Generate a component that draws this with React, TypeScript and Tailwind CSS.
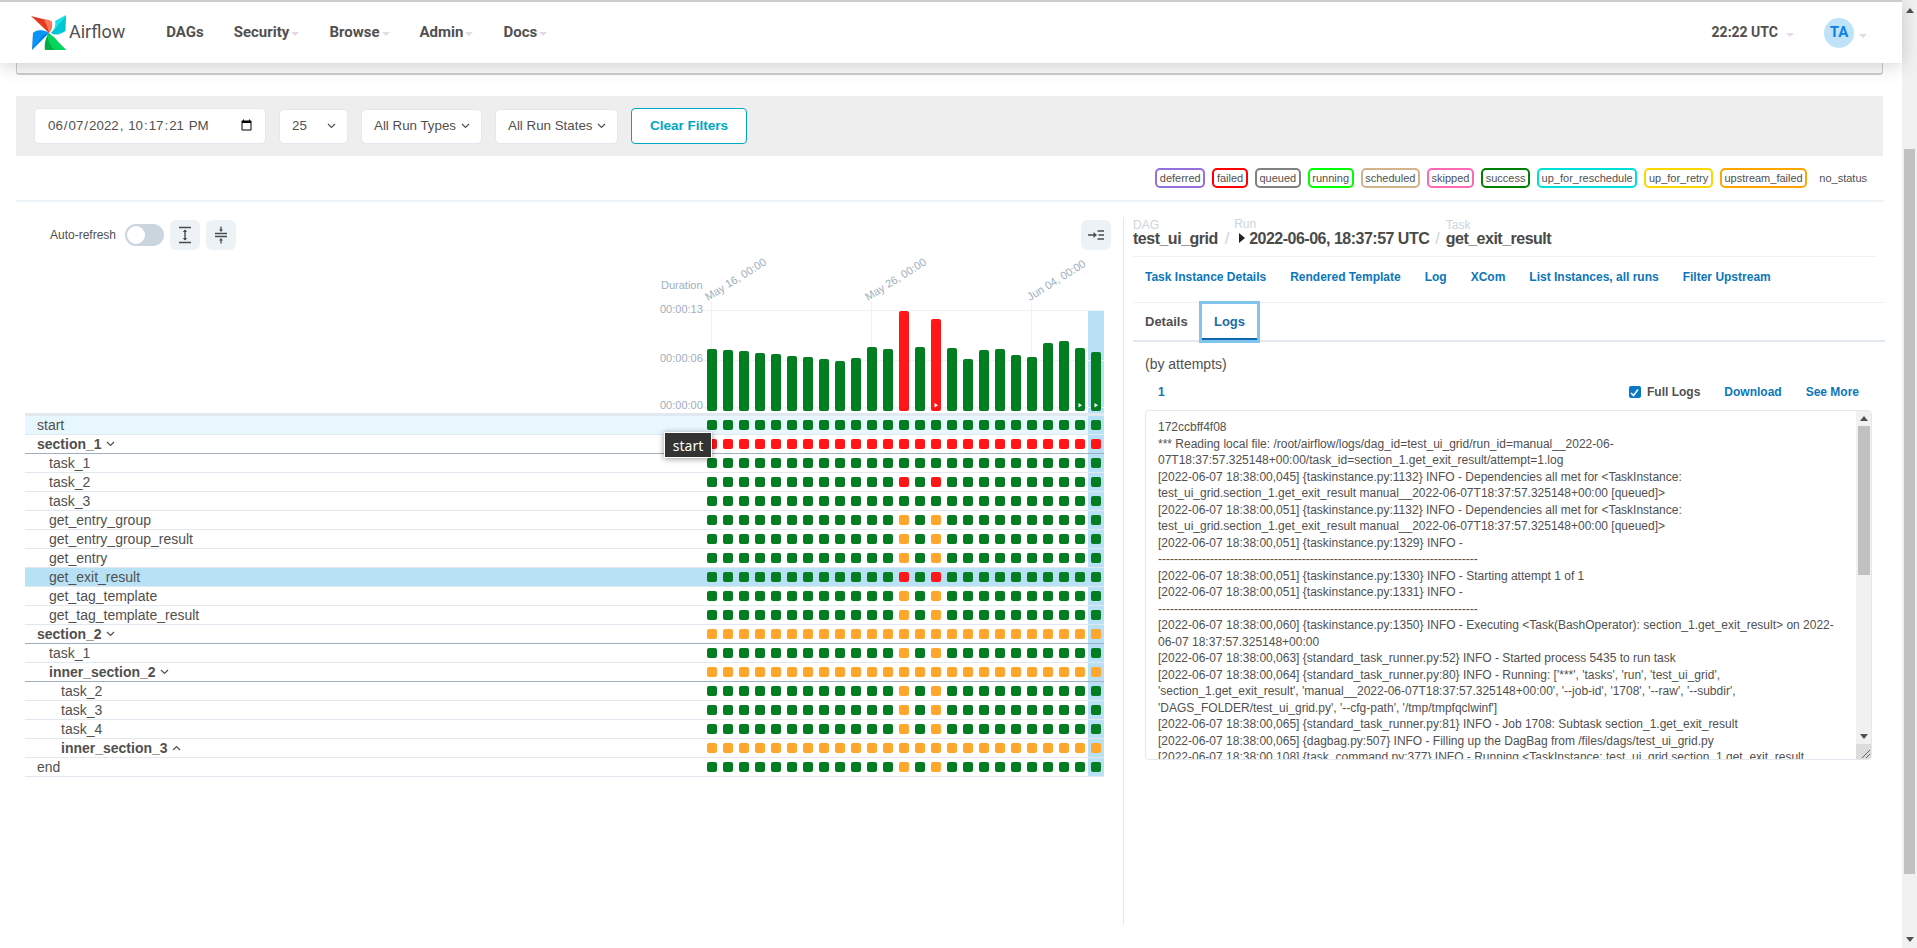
import React from "react";

const GREEN = "bg-[#027d22]";
const RED = "bg-[#ff1616]";
const ORANGE = "bg-[#ffa62d]";

type Row = { name: string; level: number; group?: "down" | "up"; pat: "g" | "r" | "o" | "gr" | "go"; selected?: boolean; hover?: boolean };

const rows: Row[] = [
  { name: "start", level: 0, pat: "g", hover: true },
  { name: "section_1", level: 0, group: "down", pat: "r" },
  { name: "task_1", level: 1, pat: "g" },
  { name: "task_2", level: 1, pat: "gr" },
  { name: "task_3", level: 1, pat: "g" },
  { name: "get_entry_group", level: 1, pat: "go" },
  { name: "get_entry_group_result", level: 1, pat: "go" },
  { name: "get_entry", level: 1, pat: "go" },
  { name: "get_exit_result", level: 1, pat: "gr", selected: true },
  { name: "get_tag_template", level: 1, pat: "go" },
  { name: "get_tag_template_result", level: 1, pat: "go" },
  { name: "section_2", level: 0, group: "down", pat: "o" },
  { name: "task_1", level: 1, pat: "go" },
  { name: "inner_section_2", level: 1, group: "down", pat: "o" },
  { name: "task_2", level: 2, pat: "go" },
  { name: "task_3", level: 2, pat: "go" },
  { name: "task_4", level: 2, pat: "go" },
  { name: "inner_section_3", level: 2, group: "up", pat: "o" },
  { name: "end", level: 0, pat: "go" },
];

const barTops = [327, 330, 333, 339, 342, 348, 351, 357, 363, 354, 321, 327, 213, 321, 237, 324, 357, 330, 327, 345, 351, 309, 303, 324, 336];
const cols = Array.from({ length: 25 }, (_, i) => i);

function cellColor(p: Row["pat"], i: number) {
  if (p === "g") return GREEN;
  if (p === "r") return RED;
  if (p === "o") return ORANGE;
  const special = i === 12 || i === 14;
  if (p === "gr") return special ? RED : GREEN;
  return special ? ORANGE : GREEN;
}

const legend: [string, string][] = [
  ["deferred", "border-[#9370db]"],
  ["failed", "border-[#ff0000]"],
  ["queued", "border-[#808080]"],
  ["running", "border-[#00ff00]"],
  ["scheduled", "border-[#d2b48c]"],
  ["skipped", "border-[#ff69b4]"],
  ["success", "border-[#008000]"],
  ["up_for_reschedule", "border-[#00e0d8]"],
  ["up_for_retry", "border-[#ffd700]"],
  ["upstream_failed", "border-[#ffa500]"],
];

const DASH = "-".repeat(80);
const logLines = [
  "172ccbff4f08",
  "*** Reading local file: /root/airflow/logs/dag_id=test_ui_grid/run_id=manual__2022-06-",
  "07T18:37:57.325148+00:00/task_id=section_1.get_exit_result/attempt=1.log",
  "[2022-06-07 18:38:00,045] {taskinstance.py:1132} INFO - Dependencies all met for <TaskInstance:",
  "test_ui_grid.section_1.get_exit_result manual__2022-06-07T18:37:57.325148+00:00 [queued]>",
  "[2022-06-07 18:38:00,051] {taskinstance.py:1132} INFO - Dependencies all met for <TaskInstance:",
  "test_ui_grid.section_1.get_exit_result manual__2022-06-07T18:37:57.325148+00:00 [queued]>",
  "[2022-06-07 18:38:00,051] {taskinstance.py:1329} INFO -",
  DASH,
  "[2022-06-07 18:38:00,051] {taskinstance.py:1330} INFO - Starting attempt 1 of 1",
  "[2022-06-07 18:38:00,051] {taskinstance.py:1331} INFO -",
  DASH,
  "[2022-06-07 18:38:00,060] {taskinstance.py:1350} INFO - Executing <Task(BashOperator): section_1.get_exit_result> on 2022-",
  "06-07 18:37:57.325148+00:00",
  "[2022-06-07 18:38:00,063] {standard_task_runner.py:52} INFO - Started process 5435 to run task",
  "[2022-06-07 18:38:00,064] {standard_task_runner.py:80} INFO - Running: ['***', 'tasks', 'run', 'test_ui_grid',",
  "'section_1.get_exit_result', 'manual__2022-06-07T18:37:57.325148+00:00', '--job-id', '1708', '--raw', '--subdir',",
  "'DAGS_FOLDER/test_ui_grid.py', '--cfg-path', '/tmp/tmpfqclwinf']",
  "[2022-06-07 18:38:00,065] {standard_task_runner.py:81} INFO - Job 1708: Subtask section_1.get_exit_result",
  "[2022-06-07 18:38:00,065] {dagbag.py:507} INFO - Filling up the DagBag from /files/dags/test_ui_grid.py",
  "[2022-06-07 18:38:00,108] {task_command.py:377} INFO - Running <TaskInstance: test_ui_grid.section_1.get_exit_result",
];

function Caret() {
  return <span className="ml-[2px] inline-block w-0 h-0 border-x-[4px] border-x-transparent border-t-[4px] border-t-[#e6d8e6] mt-[3px]" />;
}

function Logo() {
  return (
    <svg width="36" height="36" viewBox="0 0 36 36">
      <path d="M0 1 L20 6 C22 10 21 14 18 18 Z" fill="#e43921" />
      <path d="M12 3.5 L20 6 C22 10 21 14 18 18 C17 13 15 8 12 3.5Z" fill="#ff7557" />
      <path d="M35 0 L20 18 C25 21 30 19 34.5 16 Z" fill="#00c7d4" />
      <path d="M35 0 L20 18 C24 15 25 9 24 6 Z" fill="#11e1ee" />
      <path d="M1 35 L2 18 C7 14 13 15 18 18 Z" fill="#017cee" />
      <path d="M2 18 C7 14 13 15 18 18 C13 19 9 23 6.5 28 L2 33 Z" fill="#0cb6ff" opacity="0.45" />
      <path d="M35 35 L14 35 C13 28 15 22 18 18 Z" fill="#00ad46" />
      <path d="M16 20 C20 19 24 22 27 27 L35 35 L24 35 C19 31 17 25 16 20Z" fill="#04d659" />
    </svg>
  );
}

function Chevron({ className = "" }: { className?: string }) {
  return (
    <svg width="9" height="6" viewBox="0 0 9 6" className={className} fill="none" stroke="#51504f" strokeWidth="1.2">
      <path d="M1 1 L4.5 4.5 L8 1" />
    </svg>
  );
}

function NavItem({ label, caret = true }: { label: string; caret?: boolean }) {
  return (
    <div className="flex items-center text-[15px] font-bold text-[#51504f]">
      {label}
      {caret && <Caret />}
    </div>
  );
}

function Chart() {
  const W = 1079;
  const lx = (x: number) => x - 25;
  const ly = (y: number) => y - 255;
  return (
    <svg width={W} height={158} className="block" style={{ fontFamily: "'Liberation Sans', sans-serif" }}>
      <rect x={lx(1088)} y={ly(311)} width={16} height={102} fill="#b9e1f6" />
      {[310, 360, 407].map((y) => (
        <line key={y} x1={lx(702)} x2={W} y1={ly(y) + 0.5} y2={ly(y) + 0.5} stroke="#edf2f7" />
      ))}
      {[711, 871, 1031].map((x) => (
        <line key={x} x1={lx(x) + 0.5} x2={lx(x) + 0.5} y1={ly(302)} y2={ly(412)} stroke="#edf2f7" />
      ))}
      <text x={lx(661)} y={ly(289)} fontSize="11" fill="#a0aec0">Duration</text>
      <text x={lx(660)} y={ly(313)} fontSize="11" fill="#a0aec0">00:00:13</text>
      <text x={lx(660)} y={ly(362)} fontSize="11" fill="#a0aec0">00:00:06</text>
      <text x={lx(660)} y={ly(409)} fontSize="11" fill="#a0aec0">00:00:00</text>
      {[
        ["May 16, 00:00", 708],
        ["May 26, 00:00", 868],
        ["Jun 04, 00:00", 1030],
      ].map(([t, x]) => (
        <text key={t as string} x={0} y={0} fontSize="11" fill="#a0aec0" transform={`translate(${lx(x as number)} ${ly(301)}) rotate(-32)`}>
          {t}
        </text>
      ))}
      {barTops.map((t, i) => {
        const top = 240 + t / 3;
        const x = lx(707 + i * 16);
        const red = i === 12 || i === 14;
        return <rect key={i} x={x} y={ly(top)} width={10} height={411 - top} rx={2} fill={red ? "#ff1616" : "#027d22"} />;
      })}
      {[14, 23, 24].map((i) => (
        <path key={i} d={`M${lx(707 + i * 16) + 3.5} ${ly(403)} l3.5 2.2 l-3.5 2.2 z`} fill="#ffffff" />
      ))}
    </svg>
  );
}

function GridRow({ r }: { r: Row }) {
  const bg = r.selected ? "bg-[#b9e1f6]" : r.hover ? "bg-[#e8f6fd]" : "bg-white";
  const border = r.group === "down" ? "border-[#a0aec0]" : "border-[#e2e8f0]";
  const pad = r.level === 0 ? "pl-[12px]" : r.level === 1 ? "pl-[24px]" : "pl-[36px]";
  return (
    <div className={`flex h-[19px] border-b ${border} ${bg}`}>
      <div className={`flex-1 flex items-center text-[14px] leading-[18px] text-[#51504f] ${pad} ${r.group ? "font-bold" : ""}`}>
        {r.name}
        {r.group && <Chevron className={`ml-[4px] ${r.group === "up" ? "rotate-180" : ""}`} />}
      </div>
      <div className="flex">
        {cols.map((i) => (
          <div key={i} className={`w-4 pt-[4px] pl-[3px] ${i === 24 ? "bg-[#b9e1f6]" : ""}`}>
            <div className={`w-[10px] h-[10px] rounded-[2px] ${cellColor(r.pat, i)}`} />
          </div>
        ))}
      </div>
    </div>
  );
}

function Crumb({ label, value, arrow, lift }: { label: string; value: string; arrow?: boolean; lift?: boolean }) {
  return (
    <div className="flex flex-col">
      <div className={`text-[12px] leading-[12px] text-[#cbd5e0] font-normal ${lift ? "mt-[-1px] mb-[1px]" : ""}`}>{label}</div>
      <div className="flex items-center text-[16px] leading-[16px] text-[#4a4a49] font-bold tracking-[-0.5px] whitespace-nowrap">
        {arrow && <span className="w-0 h-0 ml-[5px] mr-[4px] mb-[3px] border-y-[5px] border-y-transparent border-l-[6px] border-l-[#222]" />}
        {value}
      </div>
    </div>
  );
}

function ScrollArrow({ up }: { up?: boolean }) {
  return (
    <div className={`w-0 h-0 border-x-[4px] border-x-transparent ${up ? "border-b-[5px] border-b-[#505050]" : "border-t-[5px] border-t-[#505050]"}`} />
  );
}

function Select({ label, w }: { label: string; w: string }) {
  return (
    <div className={`${w} h-[35px] bg-white rounded-[5px] border border-[#e2e8f0] flex items-center justify-between pl-[12px] pr-[11px] text-[13.33px] text-[#51504f]`}>
      {label}
      <Chevron />
    </div>
  );
}

export default function App() {
  return (
    <div className="flex h-[948px] w-full overflow-hidden bg-white text-[#51504f]" style={{ fontFamily: "'Liberation Sans', Arial, sans-serif" }}>
      <div className="flex-1 min-w-0 flex flex-col">
        <nav className="relative z-10 h-[63px] shrink-0 bg-white border-t-2 border-[#cccccc] shadow-[0_2px_18px_rgba(0,0,0,0.18)] flex items-center pl-[31px] pr-[35px]" style={{ fontFamily: "Roboto, sans-serif" }}>
          <div className="flex items-center">
            <Logo />
            <span className="ml-[2px] text-[18px] leading-none text-[#51504f] mb-[1px]">Airflow</span>
          </div>
          <div className="flex items-center gap-[30px] ml-[41px]">
            <NavItem label="DAGs" caret={false} />
            <NavItem label="Security" />
            <NavItem label="Browse" />
            <NavItem label="Admin" />
            <NavItem label="Docs" />
          </div>
          <div className="ml-auto flex items-center">
            <div className="flex items-center text-[14px] font-bold text-[#51504f]">
              22:22 UTC
              <span className="ml-[6px]"><Caret /></span>
            </div>
            <div className="ml-[30px] w-[30px] h-[30px] rounded-full bg-[#bee3f8] flex items-center justify-center text-[15px] font-bold text-[#0d80e4]">TA</div>
            <span className="ml-[3px]"><Caret /></span>
          </div>
        </nav>

        <div className="h-[12px] ml-[16px] mr-[19px] shrink-0 border-x border-b-2 border-[#cccccc] rounded-b-[3px] bg-[#fafafa]" />

        <div className="mt-[21px] ml-[16px] mr-[19px] h-[60px] shrink-0 bg-[#eeeeee] flex items-center pl-[18px]">
          <input
            type="datetime-local"
            step="1"
            defaultValue="2022-06-07T22:17:21"
            className="w-[232px] h-[36px] bg-white rounded-[5px] border border-[#e2e8f0] pl-[12px] pr-[10px] text-[13.33px] text-[#51504f]"
          />
          <div className="ml-[13px]"><Select label="25" w="w-[69px]" /></div>
          <div className="ml-[13px]"><Select label="All Run Types" w="w-[121px]" /></div>
          <div className="ml-[13px]"><Select label="All Run States" w="w-[123px]" /></div>
          <div className="ml-[13px] w-[116px] h-[36px] bg-white rounded-[4px] border border-[#00a7c4] flex items-center justify-center text-[13.5px] font-bold text-[#00a7c4]">Clear Filters</div>
        </div>

        <div className="mt-[12px] pr-[35px] flex justify-end items-center gap-[7px] h-[20px] shrink-0">
          {legend.map(([t, c]) => (
            <div key={t} className={`h-[20px] px-[2.6px] border-2 rounded-[5px] ${c} flex items-center text-[11px] text-[#51504f]`}>{t}</div>
          ))}
          <div className="ml-[5px] text-[11px] text-[#51504f]">no_status</div>
        </div>

        <div className="mt-[12px] ml-[16px] mr-[18px] h-[2px] shrink-0 bg-[#edf2f7]" />

        <div className="flex shrink-0 pl-[25px]">
          <div className="w-[1086px] pt-[18px]">
            <div className="flex items-center h-[30px]">
              <span className="ml-[25px] text-[12px] text-[#51504f]">Auto-refresh</span>
              <div className="ml-[9px] w-[39px] h-[22px] rounded-full bg-[#cbd5e0] p-[2px]">
                <div className="w-[18px] h-[18px] rounded-full bg-white" />
              </div>
              <div className="ml-[6px] w-[30px] h-[30px] rounded-[6px] bg-[#edf2f7] flex items-center justify-center">
                <svg width="14" height="18" viewBox="0 0 14 18" fill="none" stroke="#44504f" strokeWidth="1.4">
                  <path d="M1 1.5 H13 M1 16.5 H13 M7 4 V14" />
                  <path d="M4.8 6 L7 3.6 L9.2 6 Z M4.8 12 L7 14.4 L9.2 12 Z" fill="#44504f" stroke="none" />
                </svg>
              </div>
              <div className="ml-[6px] w-[30px] h-[30px] rounded-[6px] bg-[#edf2f7] flex items-center justify-center">
                <svg width="14" height="18" viewBox="0 0 14 18" fill="none" stroke="#44504f" strokeWidth="1.3">
                  <path d="M1 7.5 H13 M1 10.5 H13 M7 0.5 V4 M7 14 V17.5" />
                  <path d="M5 3.4 L7 6 L9 3.4 Z M5 14.6 L7 12 L9 14.6 Z" fill="#44504f" stroke="none" />
                </svg>
              </div>
              <div className="ml-auto w-[30px] h-[30px] rounded-[6px] bg-[#edf2f7] flex items-center justify-center">
                <svg width="16" height="10" viewBox="0 0 16 10" fill="none" stroke="#44504f" strokeWidth="1.4">
                  <path d="M0 5 H8 M9.5 1 H16 M10.5 5 H16 M9.5 9 H16" />
                  <path d="M5.5 2 L9 5 L5.5 8 Z" fill="#44504f" stroke="none" />
                </svg>
              </div>
            </div>
            <div className="mt-[5px] w-[1079px]">
              <Chart />
              <div className="relative border-t-[3px] border-[#e2e8f0]">
                {rows.map((r, i) => (
                  <GridRow key={i} r={r} />
                ))}
                <div className="absolute left-[639px] top-[16px] w-[48px] h-[26px] bg-[#333333] border border-white text-white text-[14px] flex items-center justify-center shadow-[0_1px_6px_rgba(0,0,0,0.4)]" style={{ fontFamily: "'Noto Sans', sans-serif" }}>
                  start
                </div>
              </div>
            </div>
          </div>

          <div className="ml-[12px] mt-[15px] h-[708px] w-[762px] border-l border-[#e2e8f0] pl-[9px]">
            <div className="flex items-start pt-[2px] h-[40px] border-b border-[#edf2f7] w-[743px]">
              <Crumb label="DAG" value="test_ui_grid" />
              <span className="mt-[12px] ml-[7px] mr-[5px] text-[16px] leading-[16px] text-[#cbd5e0]">/</span>
              <Crumb label="Run" value="2022-06-06, 18:37:57 UTC" arrow lift />
              <span className="mt-[12px] mx-[6px] text-[16px] leading-[16px] text-[#cbd5e0]">/</span>
              <Crumb label="Task" value="get_exit_result" />
            </div>
            <div className="h-[46px] border-b border-[#edf2f7] flex items-center pl-[12px] pb-[5px] gap-[24px] text-[12px] font-bold text-[#0c76ba]">
              <span>Task Instance Details</span>
              <span>Rendered Template</span>
              <span>Log</span>
              <span>XCom</span>
              <span>List Instances, all runs</span>
              <span>Filter Upstream</span>
            </div>
            <div className="flex h-[39px] border-b-2 border-[#e2e8f0] pl-[12px] items-stretch text-[13px] font-bold">
              <div className="flex items-center text-[#51504f] w-[54px]">Details</div>
              <div className="flex items-center justify-center w-[61px] h-[42px] mt-[-2px] text-[#1a6ca8] border-[3px] border-[#81c4ee] relative">
                Logs
                <div className="absolute left-0 right-0 bottom-0 h-[2px] bg-[#0c66ad]" />
              </div>
            </div>
            <div className="pl-[12px] pr-[13px]">
              <div className="mt-[12px] text-[14px] leading-[20px] text-[#51504f]">(by attempts)</div>
              <div className="mt-[10px] flex items-center h-[16px] pl-[13px] pr-[13px] text-[12px] font-bold text-[#0c76ba]">
                <span>1</span>
                <div className="ml-auto w-[12px] h-[12px] rounded-[2px] bg-[#0a78c8] flex items-center justify-center">
                  <svg width="9" height="9" viewBox="0 0 9 9" fill="none" stroke="#fff" strokeWidth="1.5"><path d="M1 5 L3.5 7.5 L8 1.5" /></svg>
                </div>
                <span className="ml-[6px] text-[#51504f]">Full Logs</span>
                <span className="ml-[24px]">Download</span>
                <span className="ml-[24px]">See More</span>
              </div>
              <div className="mt-[10px] w-[727px] h-[350px] border border-[#e2e8f0] rounded-[4px] overflow-hidden flex bg-white">
                <div className="flex-1 min-w-0 overflow-hidden pt-[8px] pl-[12px] text-[12px] leading-[16.5px] text-[#51504f]">
                  {logLines.map((l, i) => (
                    <div key={i} className="whitespace-pre">{l}</div>
                  ))}
                </div>
                <div className="w-[15px] shrink-0 bg-[#f1f1f1] flex flex-col items-center">
                  <div className="h-[15px] flex items-center justify-center"><ScrollArrow up /></div>
                  <div className="w-[12px] h-[149px] bg-[#c1c1c1]" />
                  <div className="flex-1" />
                  <div className="h-[15px] flex items-center justify-center"><ScrollArrow /></div>
                  <div className="h-[15px] w-full bg-[#dcdcdc] flex items-end justify-end">
                    <svg width="12" height="12" viewBox="0 0 12 12" fill="none" stroke="#666" strokeWidth="1"><path d="M11 3 L3 11 M11 7 L7 11" /></svg>
                  </div>
                </div>
              </div>
            </div>
          </div>
        </div>
      </div>

      <div className="w-[15px] shrink-0 bg-[#f1f1f1] flex flex-col items-center">
        <div className="h-[20px] flex items-center justify-center"><ScrollArrow up /></div>
        <div className="h-[129px]" />
        <div className="w-[11px] h-[725px] bg-[#c1c1c1]" />
        <div className="flex-1" />
        <div className="h-[18px] flex items-center justify-center"><ScrollArrow /></div>
      </div>
    </div>
  );
}
